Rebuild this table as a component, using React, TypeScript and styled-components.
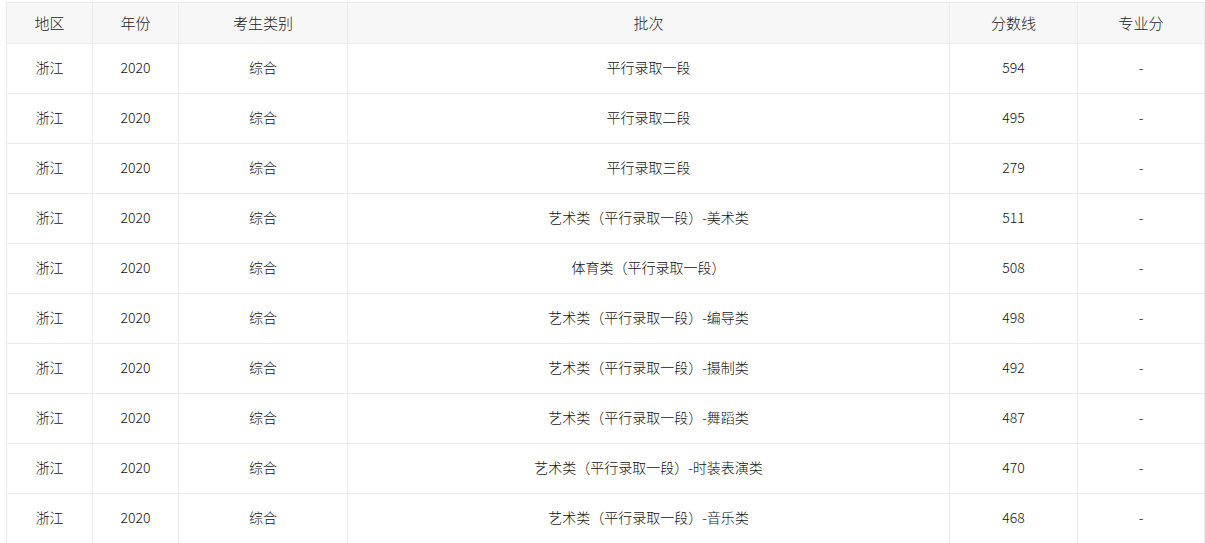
import React from "react";
import styled, { createGlobalStyle } from "styled-components";

const Global = createGlobalStyle`
  html, body { margin: 0; padding: 0; background: #fff; }
  body { font-family: "Microsoft YaHei", "Noto Sans CJK SC", "Noto Sans", sans-serif; }
`;

const Page = styled.div`
  padding: 2px 0 0 6px;
  width: 1199px;
`;

const Table = styled.table`
  width: 1199px;
  border-collapse: collapse;
  table-layout: fixed;
  font-size: 14px;
  font-weight: 300;
  color: #222;
`;

const HeadCell = styled.th<{ $w: number }>`
  width: ${(p) => p.$w}px;
  height: 38px;
  padding: 0 0 2px 0;
  background: #f7f7f7;
  border: 1px solid #ebebeb;
  font-weight: 300;
  font-size: 15px;
  color: #222;
  text-align: center;
  vertical-align: middle;
`;

const Cell = styled.td`
  height: 46px;
  padding: 0 0 3px 0;
  border: 1px solid #ebebeb;
  text-align: center;
  vertical-align: middle;
  color: #111;
`;

const cols = [
  { t: "地区", w: 85 },
  { t: "年份", w: 85 },
  { t: "考生类别", w: 168 },
  { t: "批次", w: 601 },
  { t: "分数线", w: 127 },
  { t: "专业分", w: 126 },
];

const rows: [string, number][] = [
  ["平行录取一段", 594],
  ["平行录取二段", 495],
  ["平行录取三段", 279],
  ["艺术类（平行录取一段）-美术类", 511],
  ["体育类（平行录取一段）", 508],
  ["艺术类（平行录取一段）-编导类", 498],
  ["艺术类（平行录取一段）-摄制类", 492],
  ["艺术类（平行录取一段）-舞蹈类", 487],
  ["艺术类（平行录取一段）-时装表演类", 470],
  ["艺术类（平行录取一段）-音乐类", 468],
];

export default function App() {
  return (
    <>
      <Global />
      <Page>
        <Table>
          <thead>
            <tr>
              {cols.map((c) => (
                <HeadCell key={c.t} $w={c.w}>
                  {c.t}
                </HeadCell>
              ))}
            </tr>
          </thead>
          <tbody>
            {rows.map(([batch, score], i) => (
              <tr key={i}>
                <Cell>浙江</Cell>
                <Cell>2020</Cell>
                <Cell>综合</Cell>
                <Cell>{batch}</Cell>
                <Cell>{score}</Cell>
                <Cell>-</Cell>
              </tr>
            ))}
          </tbody>
        </Table>
      </Page>
    </>
  );
}
